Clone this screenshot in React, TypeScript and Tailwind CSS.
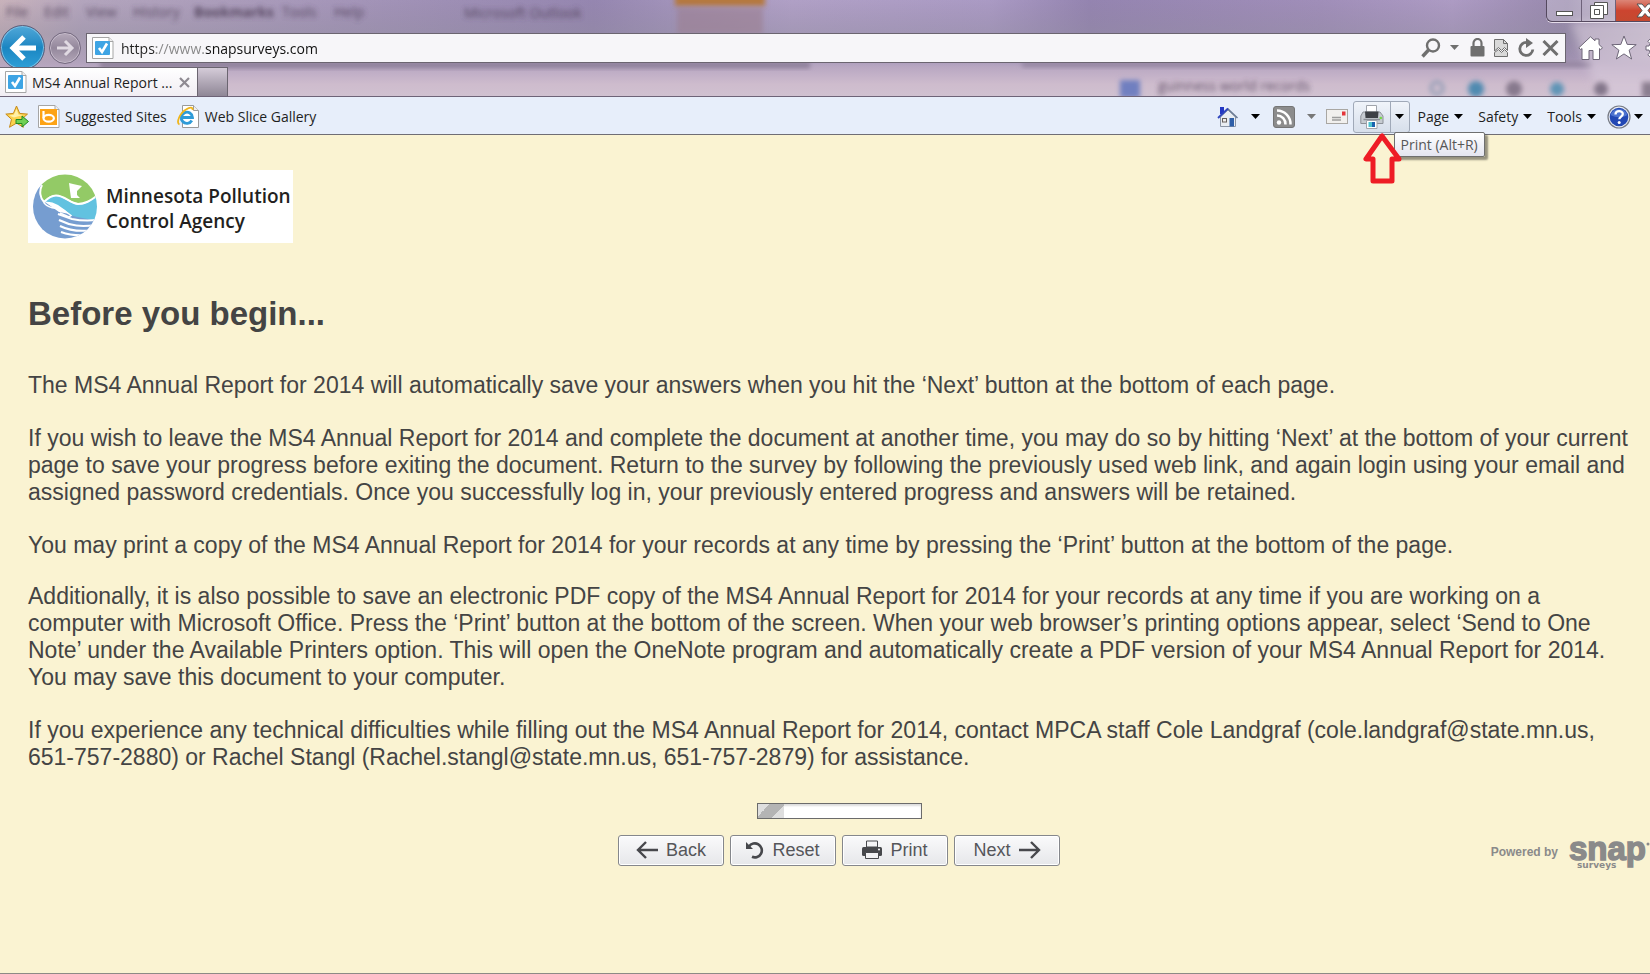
import { useState } from "react";

const buttonClass =
  "flex h-[31px] w-[106px] items-center justify-center gap-2 rounded-[3px] border border-[#85878c] bg-linear-to-b from-[#fafafb] to-[#e6e7ea] text-[18px] text-[#55565a] shadow-[inset_0_0_0_1px_#ffffff]";

function Caret({ className = "fill-black" }) {
  return (
    <svg width="9" height="5" viewBox="0 0 9 5" className={className}>
      <path d="M0 0h9L4.500 5z" />
    </svg>
  );
}

// blurred desktop showing through the window frame
function Glass() {
  return (
    <svg
      className="absolute inset-0 h-full w-full"
      viewBox="0 0 1650 96"
      preserveAspectRatio="none"
      aria-hidden="true"
    >
      <defs>
        <linearGradient id="top" x1="0" x2="1" y1="0" y2="0">
          <stop offset="0" stopColor="#c9b3bb" />
          <stop offset="0.05" stopColor="#b3a5bd" />
          <stop offset="0.2" stopColor="#a596b9" />
          <stop offset="0.36" stopColor="#9586b0" />
          <stop offset="0.42" stopColor="#a596bd" />
          <stop offset="0.48" stopColor="#b0a0c6" />
          <stop offset="0.6" stopColor="#aa9ac4" />
          <stop offset="0.66" stopColor="#9484b0" />
          <stop offset="0.8" stopColor="#a08eb9" />
          <stop offset="0.88" stopColor="#ad9bc4" />
          <stop offset="0.95" stopColor="#9788ac" />
          <stop offset="1" stopColor="#c9bcd0" />
        </linearGradient>
        <linearGradient id="shade" x1="0" x2="0" y1="0" y2="1">
          <stop offset="0" stopColor="#8c8098" stopOpacity="0" />
          <stop offset="0.36" stopColor="#8f8b9c" stopOpacity="0.4" />
          <stop offset="0.6" stopColor="#a89ab4" stopOpacity="0.4" />
          <stop offset="0.7" stopColor="#b9a8c2" />
          <stop offset="0.8" stopColor="#c5b3c9" />
          <stop offset="0.88" stopColor="#cebccd" />
          <stop offset="1" stopColor="#d0c1d0" />
        </linearGradient>
        <filter id="soft" x="-20%" y="-50%" width="140%" height="200%">
          <feGaussianBlur stdDeviation="2.500" />
        </filter>
        <filter id="softer" x="-30%" y="-60%" width="160%" height="220%">
          <feGaussianBlur stdDeviation="5" />
        </filter>
      </defs>
      <rect width="1650" height="96" fill="url(#top)" />
      <rect width="1650" height="96" fill="url(#shade)" />
      <rect x="675" y="-6" width="90" height="12" fill="#b5783c" filter="url(#soft)" />
      <rect x="677" y="8" width="86" height="26" fill="#9c7f90" opacity="0.6" filter="url(#soft)" />
      <rect x="100" y="62" width="710" height="6" fill="#8b7d97" filter="url(#soft)" />
      <rect x="1022" y="62" width="570" height="5" fill="#91829d" filter="url(#soft)" />
      <path d="M1570 22h90v74h-60z" fill="#d8cbdb" opacity="0.6" filter="url(#softer)" />
      <g fill="#4f3f58" fontSize="14" fontFamily="'Open Sans', sans-serif" opacity="0.9" filter="url(#soft)">
        <text x="6" y="17">File</text>
        <text x="44" y="17">Edit</text>
        <text x="86" y="17">View</text>
        <text x="133" y="17">History</text>
        <text x="194" y="17" fontWeight="700">Bookmarks</text>
        <text x="282" y="17">Tools</text>
        <text x="334" y="17">Help</text>
        <text x="464" y="18">Microsoft Outlook</text>
        <text x="1158" y="91">guinness world records</text>
      </g>
      <g filter="url(#soft)">
        <rect x="1120" y="80" width="20" height="18" fill="#6f7fc0" />
        <circle cx="1437" cy="88" r="6" fill="none" stroke="#8f9bb4" strokeWidth="3" />
        <circle cx="1476" cy="89" r="8" fill="#4f8ab0" />
        <circle cx="1514" cy="89" r="8" fill="#87798d" />
        <circle cx="1557" cy="89" r="7" fill="#5f94b6" />
        <circle cx="1601" cy="89" r="7" fill="#83768a" />
        <rect x="1642" y="82" width="14" height="16" fill="#8b7e90" />
      </g>
    </svg>
  );
}

function SnapFavicon() {
  return (
    <svg width="22" height="22" viewBox="0 0 22 22" className="shrink-0">
      <path d="M.5.5h16.500l4 4v17H.5z" fill="#fff" stroke="#a5a5a5" />
      <path d="M17 .5v4h4" fill="#eee" stroke="#a5a5a5" />
      <rect x="3" y="4" width="15" height="14" rx="1" fill="#3ea4e4" />
      <path d="M7 11l3 4 5-8.500" fill="none" stroke="#fff" strokeWidth="2.600" />
    </svg>
  );
}

function StarIcon() {
  return (
    <svg width="24" height="24" viewBox="0 0 24 24" className="shrink-0">
      <path
        d="M11.500 1l3.200 7.400 7.800.7-6 5.200 1.900 8-6.900-4.200-7 4.200 2-8L.8 9.100l7.600-.7z"
        fill="#fbd24d"
        stroke="#c68a1c"
      />
      <path d="M11.500 4l2 5.500 4.500.5-9 2.500-5-2 4.800-.8z" fill="#fff0a8" />
      <path d="M11 14.500h6v-3.500l6.500 5.500-6.500 5.500v-3.500h-6z" fill="#6fd053" stroke="#228a22" />
    </svg>
  );
}

function BingIcon() {
  return (
    <svg width="22" height="23" viewBox="0 0 22 23" className="shrink-0">
      <path d="M.5.5h16.500l4 4v18H.5z" fill="#fff" stroke="#a5a5a5" />
      <path d="M17 .5v4h4" fill="#eee" stroke="#a5a5a5" />
      <rect x="2" y="4" width="17" height="16" fill="#fda315" />
      <path d="M5.500 6v7" stroke="#fff" strokeWidth="2.200" />
      <ellipse cx="10.700" cy="13.200" rx="5.200" ry="3.400" fill="none" stroke="#fff" strokeWidth="2.200" />
    </svg>
  );
}

function ExplorerIcon() {
  return (
    <svg width="22" height="23" viewBox="0 0 22 23" className="shrink-0">
      <path d="M5.500.5h11l5 5v17h-16z" fill="#fff" stroke="#9a9a9a" />
      <path d="M16.500.5v5h5" fill="#eee" stroke="#9a9a9a" />
      <path d="M14.800 15.500a5.600 5.600 0 1 1 .7-3H4.500" fill="none" stroke="#2f9bd8" strokeWidth="2.800" />
      <path d="M2.500 19.500C-1.500 18 3 8 9 4.500c4-2.500 7-2.500 6.500.5" fill="none" stroke="#efb51b" strokeWidth="1.800" />
    </svg>
  );
}

function HouseIcon() {
  return (
    <svg width="22" height="22" viewBox="0 0 22 22">
      <path d="M3 1h4v7H3z" fill="#2438c4" />
      <path d="M3.500 11L11 4l7.500 7v9.500h-15z" fill="#e9edf2" stroke="#8b95a5" />
      <path d="M10.500 2.500L20.500 12" stroke="#6c7c94" strokeWidth="1.600" />
      <path d="M1 12L11 2.500" stroke="#2f45bd" strokeWidth="1.800" />
      <rect x="5.500" y="12.500" width="4" height="3.500" fill="#eee" stroke="#665f5a" />
      <path d="M12.500 12h4.500v8.500h-4.500z" fill="#2f5fa8" />
    </svg>
  );
}

function FeedIcon() {
  return (
    <svg width="22" height="22" viewBox="0 0 22 22">
      <rect x="0.500" y="0.500" width="21" height="21" rx="2.500" fill="#8c8c8c" stroke="#757575" />
      <circle cx="6" cy="16.500" r="2.200" fill="#fff" />
      <path d="M4 9.500a8.500 8.500 0 0 1 8.500 9M4 4.500a13.500 13.500 0 0 1 13.500 14" fill="none" stroke="#fff" strokeWidth="2.500" />
    </svg>
  );
}

function MailIcon() {
  return (
    <svg width="22" height="16" viewBox="0 0 22 16">
      <rect x="0.500" y="0.500" width="21" height="14" fill="#f1f0ee" stroke="#a9a7a3" />
      <path d="M6 8.500h9M6 11h9" stroke="#9d9d9d" strokeWidth="1.300" />
      <rect x="16" y="2.500" width="3.500" height="4" fill="#e4353a" />
    </svg>
  );
}

function PrinterIcon() {
  return (
    <svg width="24" height="24" viewBox="0 0 24 24">
      <path d="M6.500.5h10v8h-10z" fill="#fff" stroke="#a0a4ab" />
      <path d="M3 7h17l3 4v7.500H.8V11z" fill="#c6cbd1" stroke="#8c9198" />
      <path d="M5 6.500h13.500l-.5 6.500H5.500z" fill="#3d4045" />
      <path d="M3.500 14.500h16.500" stroke="#8a8f96" strokeWidth="1.500" />
      <circle cx="20.800" cy="13" r="1.300" fill="#74da45" />
      <path d="M6.500 15.500h10.500v8H6.500z" fill="#fff" stroke="#a0a4ab" />
      <path d="M8.500 17h3.500v5H8.500z" fill="#4cc2d0" />
      <path d="M12 17h3v5h-3z" fill="#1b62ae" />
    </svg>
  );
}

function HelpIcon() {
  return (
    <svg width="24" height="24" viewBox="0 0 24 24">
      <circle cx="12" cy="12" r="11" fill="#e9ecf3" stroke="#777b85" strokeWidth="1.200" />
      <circle cx="12" cy="12" r="9.300" fill="#2348b4" />
      <path d="M3.500 10a9 9 0 0 1 17 0c-5 3-11 3-17 0z" fill="#5f86dc" opacity="0.7" />
      <path d="M8.500 9.500c0-4.500 7.300-4.300 7.300-.5 0 2.600-3.500 2.600-3.500 5.300" fill="none" stroke="#fff" strokeWidth="2.300" />
      <circle cx="12.200" cy="17.500" r="1.500" fill="#fff" />
    </svg>
  );
}

function AgencyMark() {
  return (
    <svg width="68" height="68" viewBox="0 0 68 68" className="shrink-0">
      <clipPath id="disc">
        <circle cx="33" cy="33.500" r="32" />
      </clipPath>
      <g clipPath="url(#disc)">
        <path d="M0 8h10v19l17 12 37 7v22H0z" fill="#769dd0" />
        <path d="M10 0h56v24c-8 5-13 7-20 6-9-1-14-9-24-8-5 1-8 4-11 7-3-7-3-12-1-17z" fill="#93ca66" />
        <path
          d="M11 29c4-4 7-6 12-6 9 0 15 8 23 8.500 7 .5 12-3 20-9V48l-21-4-7-2-5-5-7-5c-5-3-10-4-15-3z"
          fill="#62c2e0"
        />
        <path d="M10 12C7 18 8 25 12 29c4-4 7-6.500 12-6.500 9 0 14 8 22 8.500 7 0 12-3 20-9" fill="none" stroke="#fff" strokeWidth="2" />
        <path d="M12 30c7 8 14 3 21 8l6 4.500-2 1.500-9-4" fill="none" stroke="#fff" strokeWidth="1.500" />
        <path
          d="M26 41l14 5c9 2 16 2 26 1M27 47c12 6 22 7 37 5M28 53c10 5 20 6 34 4M29 59c8 3 15 4 27 3"
          fill="none"
          stroke="#fff"
          strokeWidth="2"
        />
      </g>
      <path d="M37 10l4 1 9 2-5 5v4l3 3h-9l-1-7z" fill="#fff" />
    </svg>
  );
}

export default function App() {
  const [url, setUrl] = useState("https://www.snapsurveys.com");

  return (
    <div className="flex min-h-screen flex-col overflow-hidden bg-[#faf3d2] font-['Liberation_Sans',Arial,sans-serif]">
      <header className="font-['Open_Sans','Noto_Sans',sans-serif] text-[14px] text-[#1e1e1e]">
        <div className="relative h-[97px] overflow-hidden border-b border-[#6d6377]">
          <Glass />
          <div className="relative">
            <div className="-mr-4 flex h-[22px] justify-end">
              <div className="flex overflow-hidden rounded-bl-md border-b border-l border-[#55495f] shadow-[0_1px_0_#e5dcea]">
                <button aria-label="Minimize" className="flex w-[35px] items-end justify-center border-r border-[#6e627a] bg-white/25 pb-[5px]">
                  <svg width="17" height="5" viewBox="0 0 17 5">
                    <rect x="0.500" y="0.500" width="16" height="4" fill="#fff" stroke="#555" />
                  </svg>
                </button>
                <button aria-label="Restore" className="flex w-[34px] items-center justify-center border-r border-[#6e627a] bg-white/25">
                  <svg width="18" height="17" viewBox="0 0 18 17" fill="#fff" stroke="#555">
                    <path d="M4.500.5h13v12h-13z" />
                    <path d="M.5 3.500h13v13H.5zM4.500 7.500h5v5h-5z" fillRule="evenodd" />
                  </svg>
                </button>
                <button aria-label="Close" className="flex w-[50px] items-center justify-center bg-linear-to-b from-[#dc8577] via-[#cc4530] to-[#c5482f] pl-2">
                  <svg width="18" height="15" viewBox="0 0 18 15">
                    <path d="M1 1h5l3 3.500L12 1h5l-5 6.500 5 6.500h-5l-3-3.500L6 14H1l5-6.500z" fill="#fff" stroke="#555" />
                  </svg>
                </button>
              </div>
            </div>

            <div className="mt-[3px] flex h-[45px] items-center">
              <button aria-label="Back" className="size-[45px] shrink-0 rounded-full border border-[#5d5f7b] bg-linear-to-b from-[#4fa8d8] via-[#1a86c2] to-[#2fa0d8] shadow-[inset_0_0_0_1px_#7cc0e4]">
                <svg viewBox="0 0 43 43" fill="none" stroke="#fff" strokeWidth="5">
                  <path d="M35 22H13M23 11L12 22l11 11" />
                </svg>
              </button>
              <button aria-label="Forward" className="ml-1 size-[32px] shrink-0 rounded-full border border-[#74697f] bg-linear-to-b from-[#b5a9ba] via-[#94889c] to-[#b3a6b8] shadow-[inset_0_0_0_1px_#c9bfce]">
                <svg viewBox="0 0 30 30" fill="none" stroke="#e0d9e2" strokeWidth="3">
                  <path d="M7 15h15M15 8l7 7-7 7" />
                </svg>
              </button>
              <div className="ml-[5px] flex h-[30px] min-w-0 flex-1 items-center border border-[#6b6570] bg-[#f7f6f9] pr-[6px] pl-[5px]">
                <SnapFavicon />
                <input
                  aria-label="Address"
                  value={url}
                  onChange={(e) => setUrl(e.target.value)}
                  className="ml-[7px] min-w-0 flex-1 bg-[linear-gradient(90deg,#222_35px,#858585_35px,#858585_84px,#111_84px)] bg-clip-text pt-[2px] text-transparent outline-none"
                />
                <div className="flex items-center gap-[9px] text-[#6f6f6f]">
                  <button aria-label="Search" className="flex items-center gap-[9px]">
                    <svg width="20" height="20" viewBox="0 0 20 20" fill="none" stroke="currentColor">
                      <circle cx="12" cy="7.500" r="6" strokeWidth="2.400" />
                      <path d="M7.500 12L1.500 18.500" strokeWidth="3.400" />
                    </svg>
                    <Caret className="fill-[#6f6f6f]" />
                  </button>
                  <svg width="15" height="19" viewBox="0 0 15 19" className="ml-[2px]">
                    <rect x="0.500" y="8" width="14" height="10.500" rx="1" fill="currentColor" />
                    <path d="M3.500 8V5a4 4 0 0 1 8 0v3" fill="none" stroke="currentColor" strokeWidth="2.200" />
                  </svg>
                  <button aria-label="Compatibility View">
                    <svg width="14" height="18" viewBox="0 0 14 18" fill="#d9d9d9" stroke="currentColor">
                      <path d="M.5.5h9l4 4v7l-3-3-3 3-3-3-4 3.500z" />
                      <path d="M9.500.5v4h4" fill="none" />
                      <path d="M.5 17.500v-4l4-3 3 3 3-3 3 3v4z" />
                    </svg>
                  </button>
                  <div className="flex items-center gap-[7px]">
                    <button aria-label="Refresh">
                      <svg width="18" height="20" viewBox="0 0 18 20" fill="none">
                        <path d="M10 4.500a6.500 6.500 0 1 0 5.800 7" stroke="currentColor" strokeWidth="2.800" />
                        <path d="M9 0l7 5-7 5z" fill="currentColor" />
                      </svg>
                    </button>
                    <button aria-label="Stop">
                      <svg width="17" height="16" viewBox="0 0 17 16" stroke="currentColor" strokeWidth="3">
                        <path d="M1.500 1l14 14M15.500 1l-14 14" />
                      </svg>
                    </button>
                  </div>
                </div>
              </div>
              <div className="-mr-[19px] ml-3 flex items-center gap-2">
                <button aria-label="Home">
                  <svg width="25" height="24" viewBox="0 0 25 24" fill="#fff" stroke="#6e6678">
                    <path d="M12.500.8l4.500 4V3h4v5.500l3.500 3.300-1.800 1.700-1.200-.9V23.500h-6.500v-9h-4v9H4V12.600l-1.400.9L.8 11.800z" />
                  </svg>
                </button>
                <button aria-label="Favorites">
                  <svg width="26" height="25" viewBox="0 0 26 25" fill="#fff" stroke="#6e6678">
                    <path d="M13 1l3.200 8.400 9 .3-7.100 5.500L20.600 24 13 18.900 5.400 24l2.500-8.800L.8 9.700l9-.3z" />
                  </svg>
                </button>
                <button aria-label="Settings">
                  <svg width="24" height="24" viewBox="0 0 24 24" fill="#fff" stroke="#6e6678">
                    <path
                      fillRule="evenodd"
                      d="M10 1h4v3l2.500 1 2.200-2.200 2.500 2.500L19 7.500l1 2.500h3v4h-3l-1 2.500 2.200 2.200-2.500 2.500L16.500 19l-2.500 1v3h-4v-3l-2.500-1-2.200 2.200-2.500-2.500L5 16.500 4 14H1v-4h3l1-2.500-2.200-2.200 2.500-2.500L7.500 5 10 4zM12 8a4 4 0 1 0 0 8 4 4 0 0 0 0-8z"
                    />
                  </svg>
                </button>
              </div>
            </div>

            <div className="relative -mt-[3px] flex h-[29px]">
              <div className="flex w-[198px] items-center border-t border-r border-[#6b6570] bg-linear-to-b from-white to-[#f1edf3] pr-[7px] pl-[5px]">
                <SnapFavicon />
                <button className="ml-[5px] flex-1 text-left whitespace-nowrap">MS4 Annual Report ...</button>
                <button aria-label="Close tab">
                  <svg width="11" height="11" viewBox="0 0 11 11" stroke="#8f8a92" strokeWidth="2.200">
                    <path d="M1 1l9 9M10 1l-9 9" />
                  </svg>
                </button>
              </div>
              <button aria-label="New tab" className="w-[30px] border-t border-r border-[#6b6570] bg-linear-to-b from-[#d5ccd9] to-[#8f8796]" />
            </div>
          </div>
        </div>

        <div className="flex h-[38px] items-center justify-between border-b border-[#6f6d74] bg-[#e7eefa] pt-[2px] pr-[7px] pl-[5px]">
          <nav className="flex items-center gap-[9px]">
            <button aria-label="Add to Favorites bar">
              <StarIcon />
            </button>
            <a href="#suggested" className="flex items-center gap-[5px]">
              <BingIcon />
              Suggested Sites
            </a>
            <a href="#gallery" className="ml-px flex items-center gap-[6px]">
              <ExplorerIcon />
              Web Slice Gallery
            </a>
          </nav>
          <div className="flex items-center">
            <button aria-label="Home" className="flex items-center gap-3">
              <HouseIcon />
              <Caret />
            </button>
            <button aria-label="Feeds" className="ml-[13px] flex items-center gap-3">
              <FeedIcon />
              <Caret className="fill-[#777]" />
            </button>
            <button aria-label="Read mail" className="ml-[10px]">
              <MailIcon />
            </button>
            <div className="relative ml-[5px] flex h-[32px] rounded-[3px] border border-[#a0a9b8] bg-linear-to-b from-[#f0f4fa] via-[#e3e9f2] to-[#d7dfeb]">
              <button aria-label="Print" className="flex w-[37px] items-center justify-center border-r border-[#a0a9b8]">
                <PrinterIcon />
              </button>
              <button aria-label="Print options" className="flex w-[18px] items-center justify-center">
                <Caret />
              </button>
              <svg width="40" height="51" viewBox="0 0 40 51" className="absolute top-[31px] left-2 z-10">
                <path d="M20 3L4 26h7v22h19V26h7z" fill="none" stroke="#ee1c25" strokeWidth="5" strokeLinejoin="round" />
              </svg>
              <div
                role="tooltip"
                className="absolute top-[30px] left-10 flex h-[25px] items-center rounded-[2px] border border-[#6f6f6f] bg-linear-to-b from-white to-[#e4e5f0] px-[6px] whitespace-nowrap text-[#575757] shadow-[3px_3px_2px_#00000066]"
              >
                Print (Alt+R)
              </div>
            </div>
            <button className="ml-2 flex items-center gap-[5px]">
              Page
              <Caret />
            </button>
            <button className="ml-[15px] flex items-center gap-[5px]">
              Safety
              <Caret />
            </button>
            <button className="ml-[15px] flex items-center gap-[5px]">
              Tools
              <Caret />
            </button>
            <button aria-label="Help" className="ml-[11px] flex items-center gap-[3px]">
              <HelpIcon />
              <Caret />
            </button>
          </div>
        </div>
      </header>

      <main className="flex-1 border-b border-[#8c8a86] pt-[35px] pl-7 text-[23px] leading-[27px] text-[#444]">
        <div className="flex h-[73px] w-[265px] items-center gap-[6px] bg-white pl-1 font-['Open_Sans','Noto_Sans',sans-serif] text-[19px] leading-[25px] font-semibold whitespace-nowrap text-[#231f20]">
          <AgencyMark />
          <div className="pt-1">
            Minnesota Pollution
            <br />
            Control Agency
          </div>
        </div>

        <h1 className="mt-[51px] text-[33px] leading-[40px] font-bold">Before you begin...</h1>

        <div className="pr-[14px]">
          <p className="mt-[38px]">
            The MS4 Annual Report for 2014 will automatically save your answers when you hit the ‘Next’ button at the
            bottom of each page.
          </p>
          <p className="mt-[26px]">
            If you wish to leave the MS4 Annual Report for 2014 and complete the document at another time, you may do
            so by hitting ‘Next’ at the bottom of your current page to save your progress before exiting the document.
            Return to the survey by following the previously used web link, and again login using your email and
            assigned password credentials. Once you successfully log in, your previously entered progress and answers
            will be retained.
          </p>
          <p className="mt-[26px]">
            You may print a copy of the MS4 Annual Report for 2014 for your records at any time by pressing the ‘Print’
            button at the bottom of the page.
          </p>
          <p className="mt-[24px]">
            Additionally, it is also possible to save an electronic PDF copy of the MS4 Annual Report for 2014 for your
            records at any time if you are working on a computer with Microsoft Office. Press the ‘Print’ button at the
            bottom of the screen. When your web browser’s printing options appear, select ‘Send to One Note’ under the
            Available Printers option. This will open the OneNote program and automatically create a PDF version of
            your MS4 Annual Report for 2014. You may save this document to your computer.
          </p>
          <p className="mt-[26px]">
            If you experience any technical difficulties while filling out the MS4 Annual Report for 2014, contact MPCA
            staff Cole Landgraf (cole.landgraf@state.mn.us, 651-757-2880) or Rachel Stangl (Rachel.stangl@state.mn.us,
            651-757-2879) for assistance.
          </p>
        </div>

        <div
          role="progressbar"
          aria-label="Survey progress"
          aria-valuenow={16}
          className="mx-auto mt-8 h-4 w-[165px] border border-[#6b6b6b] bg-white shadow-[inset_0_2px_2px_#dddddd]"
        >
          <div className="h-full w-[16%] bg-[linear-gradient(135deg,#dedede_30%,#b4b4b4_30%,#b4b4b4_70%,#dedede_70%)]" />
        </div>

        <div className="mt-[7px] grid grid-cols-[1fr_auto_1fr] items-center">
          <div className="col-start-2 flex gap-[6px]">
            <button className={buttonClass}>
              <svg width="22" height="18" viewBox="0 0 22 18" fill="none" stroke="#47484c" strokeWidth="2.400">
                <path d="M22 9H2M10 1L2 9l8 8" />
              </svg>
              Back
            </button>
            <button className={buttonClass}>
              <svg width="18" height="18" viewBox="0 0 18 18" fill="none" stroke="#47484c">
                <path d="M3 5.500A7 7 0 1 1 6 15.800" strokeWidth="2.600" />
                <path d="M0 1v7h7z" fill="#47484c" stroke="none" />
              </svg>
              Reset
            </button>
            <button className={buttonClass}>
              <svg width="20" height="20" viewBox="0 0 20 20">
                <path d="M4.500 1h11v6h-11z" fill="none" stroke="#47484c" />
                <rect y="7" width="20" height="9" rx="1.500" fill="#47484c" />
                <path d="M3.500 12.500h13v6h-13z" fill="#f2f2f4" stroke="#47484c" />
                <circle cx="17" cy="9.500" r="1" fill="#fff" />
              </svg>
              Print
            </button>
            <button className={buttonClass}>
              Next
              <svg width="22" height="18" viewBox="0 0 22 18" fill="none" stroke="#47484c" strokeWidth="2.400">
                <path d="M0 9h20M12 1l8 8-8 8" />
              </svg>
            </button>
          </div>
          <a href="#snap" className="flex items-center gap-[10px] justify-self-end pt-1 font-bold whitespace-nowrap text-[#8a8a8a]">
            <span className="text-[12px]">Powered by</span>
            <svg width="82" height="44" viewBox="0 0 82 44" fill="#8a8a8a">
              <text x="1" y="30" fontSize="33" stroke="#8a8a8a" strokeWidth="1.500">
                snap
              </text>
              <text x="9" y="38" fontSize="9" fontFamily="'DejaVu Sans', sans-serif">
                surveys
              </text>
              <circle cx="80" cy="14" r="1.500" />
            </svg>
          </a>
        </div>
      </main>
    </div>
  );
}
